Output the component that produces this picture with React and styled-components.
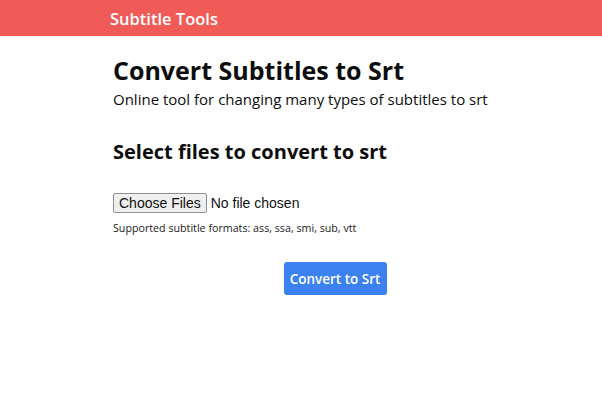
import styled, { createGlobalStyle } from "styled-components";

const Global = createGlobalStyle`
  body {
    margin: 0;
    background: #ffffff;
    font-family: "Open Sans", "Noto Sans", sans-serif;
    color: #0d0d0d;
  }
`;

// HEADER
const Header = styled.header`
  height: 36px;
  background: #f05a57;
  display: flex;
  align-items: center;
  padding-left: 110px;
`;
const Brand = styled.span`
  color: #fff;
  font-size: 16.5px;
  font-weight: 600;
`;

// CONTENT
const Main = styled.main`
  width: 444px;
  margin-left: 113px;
  padding-top: 18px;
`;
const Title = styled.h1`
  margin: 0;
  font-size: 25px;
  font-weight: 700;
  line-height: 32px;
`;
const Lead = styled.p`
  margin: 2px 0 0;
  font-size: 15px;
  line-height: 22px;
`;
const Section = styled.h2`
  margin: 28px 0 0;
  font-size: 20px;
  font-weight: 700;
  line-height: 28px;
`;
const Form = styled.form`
  margin-top: 27px;
  display: flex;
  flex-direction: column;
  align-items: flex-start;
`;
const FileInput = styled.input`
  font-family: "Liberation Sans", Arial, sans-serif;
  font-size: 14px;
  color: #111;
  &::file-selector-button {
    font-family: "Liberation Sans", Arial, sans-serif;
    font-size: 14px;
    height: 20px;
    padding: 0 5px;
    margin-right: 4px;
    border: 1px solid #8f8f8f;
    border-radius: 2px;
    background: #efefef;
    color: #111;
  }
`;
const Hint = styled.small`
  margin-top: 8px;
  font-size: 10.7px;
  color: #222;
`;
const Actions = styled.div`
  align-self: stretch;
  display: flex;
  justify-content: center;
  margin-top: 27px;
`;
const Button = styled.button`
  width: 103px;
  height: 33px;
  padding: 0;
  border: none;
  border-radius: 3px;
  background: #3b82f0;
  color: #fff;
  font-family: "Open Sans", sans-serif;
  font-size: 13.5px;
  font-weight: 600;
  white-space: nowrap;
  cursor: pointer;
`;

const App = () => {
  return (
    <>
      <Global />
      <Header>
        <Brand>Subtitle Tools</Brand>
      </Header>
      <Main>
        <Title>Convert Subtitles to Srt</Title>
        <Lead>Online tool for changing many types of subtitles to srt</Lead>
        <Section>Select files to convert to srt</Section>
        <Form onSubmit={(e) => e.preventDefault()}>
          <FileInput type="file" multiple />
          <Hint>Supported subtitle formats: ass, ssa, smi, sub, vtt</Hint>
          <Actions>
            <Button type="submit">Convert to Srt</Button>
          </Actions>
        </Form>
      </Main>
    </>
  );
};

export default App;
